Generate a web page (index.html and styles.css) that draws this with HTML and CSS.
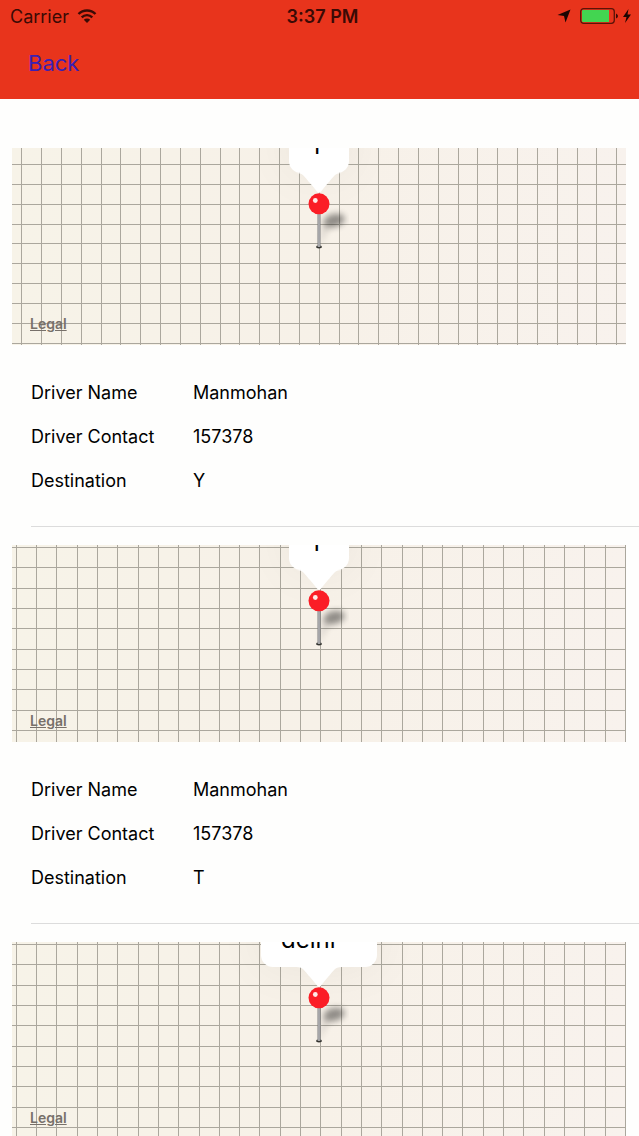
FILE: index.html
```html
<!DOCTYPE html>
<html lang="en">
<head>
    <meta charset="UTF-8">
    <meta name="viewport" content="width=device-width, initial-scale=1.0">
    <title>Drivers</title>
    <link rel="stylesheet" href="styles.css">
</head>
<body>
    <!-- red header with status bar -->
    <header class="header">
        <div class="status-bar">
            <div class="carrier">
                <span>Carrier</span>
                <svg width="20" height="16" viewBox="0 0 20 16" fill="none" stroke="#3a0a05" stroke-width="2.4">
                    <path d="M1.5 6 A12 12 0 0 1 18.5 6"/>
                    <path d="M4.7 9.3 A7.5 7.5 0 0 1 15.3 9.3"/>
                    <path d="M10 15 L6.8 11.8 A4.5 4.5 0 0 1 13.2 11.8 Z" fill="#3a0a05" stroke="none"/>
                </svg>
            </div>
            <div class="time">3:37 PM</div>
            <div class="indicators">
                <svg width="14" height="14" viewBox="0 0 14 14"><path d="M13.5 0.5 L8.5 13.5 L7 7 L0.5 6 Z" fill="#1c0502"/></svg>
                <svg width="38" height="16" viewBox="0 0 38 16">
                    <rect x="0.7" y="0.7" width="33.6" height="14.6" rx="3" fill="none" stroke="#5a1408" stroke-width="1.3"/>
                    <path d="M3 2 H29 V14 H3 Q2 14 2 13 V3 Q2 2 3 2 Z" fill="#43d551"/>
                    <path d="M36 5.5 Q38 6.5 38 8 Q38 9.5 36 10.5 Z" fill="#3a0a05"/>
                </svg>
                <svg width="8" height="14" viewBox="0 0 8 14"><path d="M5.5 0 L0 8 H3.5 L2 14 L8 5.5 H4.5 Z" fill="#1c0502"/></svg>
            </div>
        </div>
        <button class="back" type="button">Back</button>
    </header>

    <main class="list">
        <section class="trip">
            <div class="map">
                <svg class="grid" aria-hidden="true">
                    <defs>
                        <pattern id="grid-a" x="9" y="16" width="119" height="119" patternUnits="userSpaceOnUse">
                            <path class="line" d="M0.5 0V119M20.5 0V119M40.5 0V119M60.5 0V119M80.5 0V119M99.5 0V119M0 0.5H119M0 20.5H119M0 40.5H119M0 60.5H119M0 79.5H119M0 99.5H119"/>
                        </pattern>
                        <pattern id="grid-b" x="4" y="2" width="203" height="203" patternUnits="userSpaceOnUse">
                            <path class="line" d="M0.5 0V203M20.5 0V203M40.5 0V203M61.5 0V203M81.5 0V203M101.5 0V203M122.5 0V203M142.5 0V203M162.5 0V203M183.5 0V203M0 0.5H203M0 20.5H203M0 41.5H203M0 61.5H203M0 81.5H203M0 102.5H203M0 122.5H203M0 142.5H203M0 163.5H203M0 183.5H203"/>
                        </pattern>
                        <linearGradient id="stem" x1="0" x2="1" y1="0" y2="0">
                            <stop offset="0" stop-color="#7c7c7e"/>
                            <stop offset="0.5" stop-color="#bcbcbf"/>
                            <stop offset="1" stop-color="#77777a"/>
                        </linearGradient>
                        <filter id="soft" x="-50%" y="-100%" width="200%" height="300%"><feGaussianBlur stdDeviation="3"/></filter>
                        <symbol id="pin" viewBox="0 0 60 58">
                            <path d="M30 54 L34 32 L42 32 Z" fill="#000" opacity="0.12" filter="url(#soft)"/>
                            <ellipse cx="45" cy="27.5" rx="11" ry="6.5" transform="rotate(-14 45 27.5)" fill="#000" opacity="0.42" filter="url(#soft)"/>
                            <ellipse cx="30" cy="54" rx="3" ry="1.4" fill="#33332f"/>
                            <rect x="28.5" y="18" width="3" height="36" fill="url(#stem)"/>
                            <circle cx="30" cy="10.8" r="10.5" fill="#fb1d26"/>
                            <circle cx="26.3" cy="7.5" r="2.4" fill="#ffe9e6"/>
                        </symbol>
                        <symbol id="tail" viewBox="0 0 46 20">
                            <path d="M0 0 C8 0 9 5 14 10 L21 18.5 Q23 21 25 18.5 L32 10 C37 5 38 0 46 0 Z" fill="#fff"/>
                        </symbol>
                    </defs>
                    <rect width="100%" height="100%" fill="url(#grid-a)"/>
                </svg>
                <div class="marker">
                    <div class="bubble">Y</div>
                    <svg class="tail"><use href="#tail"/></svg>
                    <svg class="pin"><use href="#pin"/></svg>
                </div>
                <a class="legal" href="#">Legal</a>
            </div>
            <dl class="details">
                <dt>Driver Name</dt>
                <dd>Manmohan</dd>
                <dt>Driver Contact</dt>
                <dd>157378</dd>
                <dt>Destination</dt>
                <dd>Y</dd>
            </dl>
        </section>

        <section class="trip">
            <div class="map">
                <svg class="grid" aria-hidden="true"><rect width="100%" height="100%" fill="url(#grid-b)"/></svg>
                <div class="marker">
                    <div class="bubble">T</div>
                    <svg class="tail"><use href="#tail"/></svg>
                    <svg class="pin"><use href="#pin"/></svg>
                </div>
                <a class="legal" href="#">Legal</a>
            </div>
            <dl class="details">
                <dt>Driver Name</dt>
                <dd>Manmohan</dd>
                <dt>Driver Contact</dt>
                <dd>157378</dd>
                <dt>Destination</dt>
                <dd>T</dd>
            </dl>
        </section>

        <section class="trip">
            <div class="map">
                <svg class="grid" aria-hidden="true"><rect width="100%" height="100%" fill="url(#grid-b)"/></svg>
                <div class="marker">
                    <div class="bubble wide">delhi</div>
                    <svg class="tail"><use href="#tail"/></svg>
                    <svg class="pin"><use href="#pin"/></svg>
                </div>
                <a class="legal" href="#">Legal</a>
            </div>
        </section>
    </main>
</body>
</html>
```

FILE: styles.css
```css
* {
    box-sizing: border-box;
}

body {
    margin: 0;
    height: 100vh;
    display: flex;
    flex-direction: column;
    overflow: hidden;
    background: #fefefd;
    color: #000;
    font-family: Inter, "Liberation Sans", sans-serif;
    font-size: 18px;
}

/* header */
.header {
    flex: none;
    padding-bottom: 20px;
    background: #e8341c;
}

.status-bar {
    display: grid;
    grid-template-columns: 1fr auto 1fr;
    align-items: center;
    height: 32px;
    padding: 0 8px 0 10px;
    color: #3a0a05;
}

.carrier,
.indicators {
    display: flex;
    align-items: center;
    gap: 8px;
}

.indicators {
    justify-content: flex-end;
    gap: 5px;
}

.indicators svg:first-child {
    margin-right: 4px;
}

.time {
    padding-left: 4px;
    font-weight: 600;
}

.back {
    display: block;
    margin: 15px 0 0 28px;
    padding: 0;
    border: 0;
    background: none;
    color: #3a1fb4;
    font: inherit;
    font-size: 22px;
    line-height: 32px;
}

/* list */
.list {
    flex: 1;
    min-height: 0;
    padding-top: 49px;
    overflow: hidden;
}

.map {
    position: relative;
    height: 197px;
    margin: 0 13px 0 12px;
    overflow: hidden;
    background: linear-gradient(90deg, #f7f3e8, #f7f1e8 50%, #f8f2ed);
}

.grid {
    display: block;
    width: 100%;
    height: 100%;
}

.line {
    fill: none;
    stroke: #aba79d;
    stroke-width: 1;
}

/* callout and pin lie over the map */
.marker {
    position: absolute;
    top: -35px;
    left: 0;
    right: 0;
    display: flex;
    flex-direction: column;
    align-items: center;
}

.bubble {
    min-width: 60px;
    height: 60px;
    padding: 18px 20px 12px;
    border-radius: 12px;
    background: #fff;
    box-shadow: 0 0 50px rgba(0, 0, 0, 0.06);
    font-size: 24px;
    line-height: 30px;
}

.bubble.wide {
    min-width: 116px;
}

.tail {
    position: relative;
    width: 46px;
    height: 20px;
}

.pin {
    width: 60px;
    height: 58px;
}

.legal {
    position: absolute;
    left: 18px;
    bottom: 12px;
    color: #77706a;
    font-size: 14px;
    font-weight: 600;
    line-height: 18px;
}

.details {
    display: grid;
    grid-template-columns: 162px 1fr;
    margin: 0 0 18px 31px;
    padding: 26px 0 23px;
    border-bottom: 1px solid #dcdcdc;
    line-height: 44px;
}

.details dd {
    margin: 0;
}
```
